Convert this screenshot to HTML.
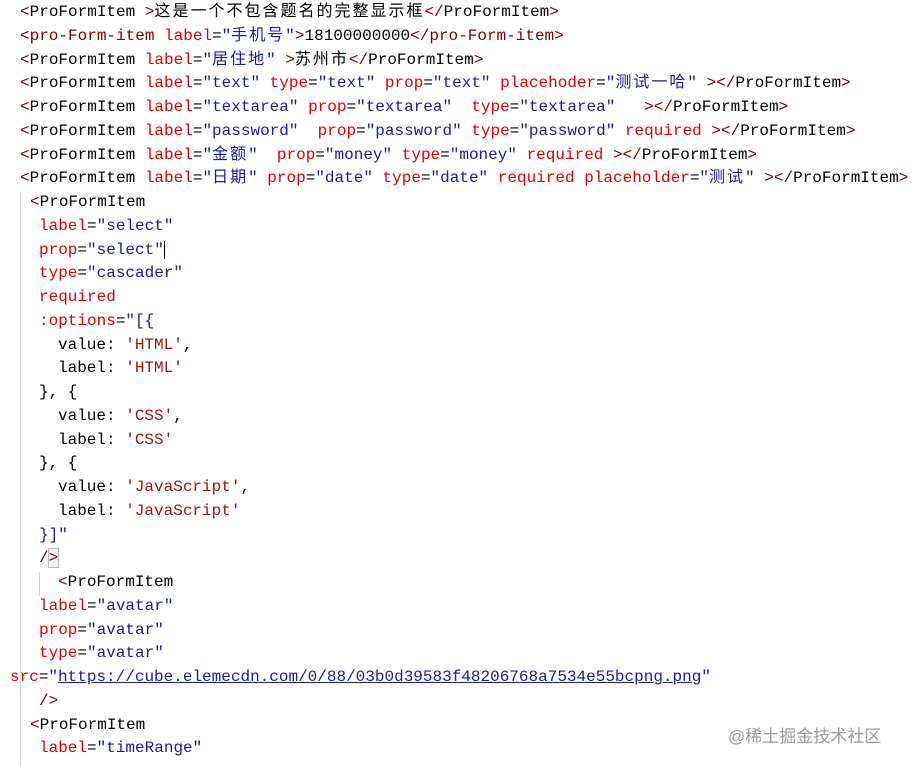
<!DOCTYPE html>
<html><head><meta charset="utf-8"><style>
html,body{margin:0;padding:0;background:#fff;width:913px;height:766px;overflow:hidden;position:relative}
.l{position:absolute;white-space:pre;font-family:"Liberation Mono","Noto Sans CJK SC",monospace;font-size:16px;line-height:24px;height:24px;color:#000}
.b{color:#800000}.a{color:#e50000}.v{color:#1a1aa6}.s{color:#a11515}
.c{letter-spacing:2px}
.g{position:absolute;background:#d8d8d8;width:1px}
.u{text-decoration:underline}
.w{position:absolute;left:728px;top:722px;font-family:"Liberation Sans","Noto Sans CJK SC",sans-serif;font-size:17px;color:#9a9a9a}
</style></head><body>
<div class="g" style="left:20px;top:192px;height:574px"></div>
<div class="g" style="left:39px;top:572px;height:24px"></div>
<div class="l" style="left:20px;top:0px"><span class="b">&lt;</span>ProFormItem <span class="b">&gt;</span><span class="c">这是一个不包含题名的完整显示框</span><span class="b">&lt;/</span>ProFormItem<span class="b">&gt;</span></div>
<div class="l" style="left:20px;top:23.75px"><span class="b">&lt;pro-Form-item </span><span class="a">label</span>=<span class="v">"<span class="c">手机号</span>"</span><span class="b">&gt;</span>18100000000<span class="b">&lt;/pro-Form-item&gt;</span></div>
<div class="l" style="left:20px;top:47.5px"><span class="b">&lt;</span>ProFormItem <span class="a">label</span>=<span class="v">"<span class="c">居住地</span>"</span> <span class="b">&gt;</span><span class="c">苏州市</span><span class="b">&lt;/</span>ProFormItem<span class="b">&gt;</span></div>
<div class="l" style="left:20px;top:71.25px"><span class="b">&lt;</span>ProFormItem <span class="a">label</span>=<span class="v">"text"</span> <span class="a">type</span>=<span class="v">"text"</span> <span class="a">prop</span>=<span class="v">"text"</span> <span class="a">placehoder</span>=<span class="v">"<span class="c">测试一哈</span>"</span> <span class="b">&gt;&lt;/</span>ProFormItem<span class="b">&gt;</span></div>
<div class="l" style="left:20px;top:95px"><span class="b">&lt;</span>ProFormItem <span class="a">label</span>=<span class="v">"textarea"</span> <span class="a">prop</span>=<span class="v">"textarea"</span>  <span class="a">type</span>=<span class="v">"textarea"</span>   <span class="b">&gt;&lt;/</span>ProFormItem<span class="b">&gt;</span></div>
<div class="l" style="left:20px;top:118.75px"><span class="b">&lt;</span>ProFormItem <span class="a">label</span>=<span class="v">"password"</span>  <span class="a">prop</span>=<span class="v">"password"</span> <span class="a">type</span>=<span class="v">"password"</span> <span class="a">required</span> <span class="b">&gt;&lt;/</span>ProFormItem<span class="b">&gt;</span></div>
<div class="l" style="left:20px;top:142.5px"><span class="b">&lt;</span>ProFormItem <span class="a">label</span>=<span class="v">"<span class="c">金额</span>"</span>  <span class="a">prop</span>=<span class="v">"money"</span> <span class="a">type</span>=<span class="v">"money"</span> <span class="a">required</span> <span class="b">&gt;&lt;/</span>ProFormItem<span class="b">&gt;</span></div>
<div class="l" style="left:20px;top:166.25px"><span class="b">&lt;</span>ProFormItem <span class="a">label</span>=<span class="v">"<span class="c">日期</span>"</span> <span class="a">prop</span>=<span class="v">"date"</span> <span class="a">type</span>=<span class="v">"date"</span> <span class="a">required</span> <span class="a">placeholder</span>=<span class="v">"<span class="c">测试</span>"</span> <span class="b">&gt;&lt;/</span>ProFormItem<span class="b">&gt;</span></div>
<div class="l" style="left:30px;top:190px"><span class="b">&lt;</span>ProFormItem</div>
<div class="l" style="left:39px;top:213.75px"><span class="a">label</span>=<span class="v">"select"</span></div>
<div class="l" style="left:39px;top:237.5px"><span class="a">prop</span>=<span class="v">"select"</span><span style="border-left:1.5px solid #000"></span></div>
<div class="l" style="left:39px;top:261.25px"><span class="a">type</span>=<span class="v">"cascader"</span></div>
<div class="l" style="left:39px;top:285px"><span class="a">required</span></div>
<div class="l" style="left:39px;top:308.75px"><span class="a">:options</span>=<span class="v">"[{</span></div>
<div class="l" style="left:58px;top:332.5px">value: <span class="s">'HTML'</span>,</div>
<div class="l" style="left:58px;top:356.25px">label: <span class="s">'HTML'</span></div>
<div class="l" style="left:39px;top:380px">}, {</div>
<div class="l" style="left:58px;top:403.75px">value: <span class="s">'CSS'</span>,</div>
<div class="l" style="left:58px;top:427.5px">label: <span class="s">'CSS'</span></div>
<div class="l" style="left:39px;top:451.25px">}, {</div>
<div class="l" style="left:58px;top:475px">value: <span class="s">'JavaScript'</span>,</div>
<div class="l" style="left:58px;top:498.75px">label: <span class="s">'JavaScript'</span></div>
<div class="l" style="left:39px;top:522.5px"><span class="v">}]"</span></div>
<div class="l" style="left:39px;top:546.25px"><span class="b">/</span><span class="b" style="outline:1px solid #bbb;background:#f0f0f0">&gt;</span></div>
<div class="l" style="left:58px;top:570px"><span class="b">&lt;</span>ProFormItem</div>
<div class="l" style="left:39px;top:593.75px"><span class="a">label</span>=<span class="v">"avatar"</span></div>
<div class="l" style="left:39px;top:617.5px"><span class="a">prop</span>=<span class="v">"avatar"</span></div>
<div class="l" style="left:39px;top:641.25px"><span class="a">type</span>=<span class="v">"avatar"</span></div>
<div class="l" style="left:10px;top:665px"><span class="a">src</span>=<span class="v">"<span class="u">https://cube.elemecdn.com/0/88/03b0d39583f48206768a7534e55bcpng.png</span>"</span></div>
<div class="l" style="left:39px;top:688.75px"><span class="b">/&gt;</span></div>
<div class="l" style="left:30px;top:712.5px"><span class="b">&lt;</span>ProFormItem</div>
<div class="l" style="left:39px;top:736.25px"><span class="a">label</span>=<span class="v">"timeRange"</span></div>
<div class="w">@稀土掘金技术社区</div>
</body></html>
